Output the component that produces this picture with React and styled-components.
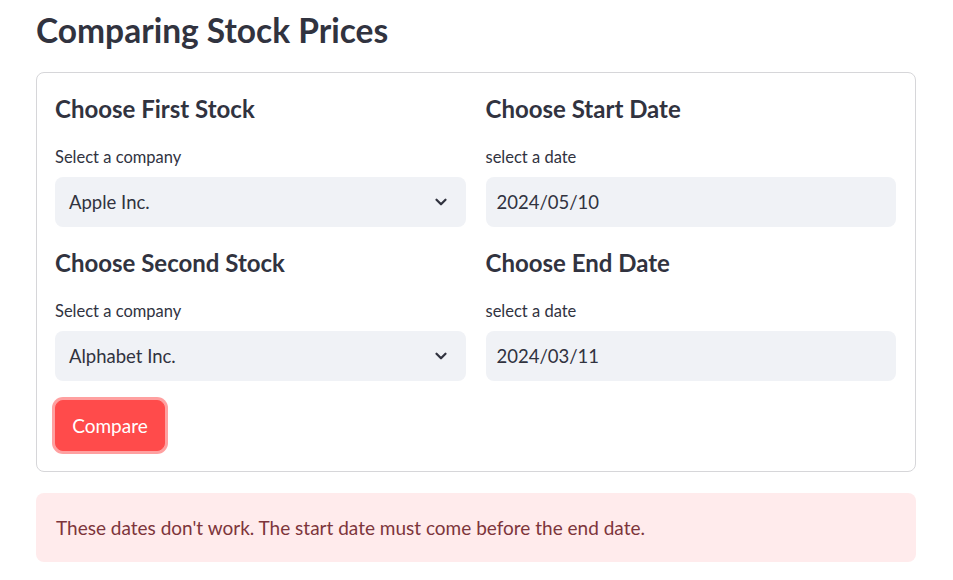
import styled, { createGlobalStyle } from "styled-components";

const GlobalStyle = createGlobalStyle`
  body {
    margin: 0;
    background: #ffffff;
    font-family: "Lato", "Noto Sans", sans-serif;
    color: #31333f;
  }
  * { box-sizing: border-box; }
`;

const Page = styled.div`
  width: 953px;
  padding: 7px 37px 0 36px;
  display: flex;
  flex-direction: column;
`;

const Title = styled.h1`
  margin: 0;
  height: 46px;
  line-height: 46px;
  font-size: 33.5px;
  font-weight: 700;
  color: #31333f;
`;

const Form = styled.div`
  margin-top: 19px;
  border: 1px solid #d6d6d9;
  border-radius: 8px;
  padding: 18px 19px 20px 18px;
  display: flex;
  flex-direction: column;
`;

const Grid = styled.div`
  display: grid;
  grid-template-columns: 1fr 1fr;
  column-gap: 20px;
  row-gap: 18px;
`;

const Field = styled.div`
  display: flex;
  flex-direction: column;
`;

const SubHeader = styled.h3`
  margin: 0;
  height: 36px;
  line-height: 36px;
  font-size: 24px;
  font-weight: 700;
`;

const Label = styled.label`
  margin-top: 19px;
  height: 22px;
  line-height: 22px;
  font-size: 16.5px;
  color: #31333f;
`;

const Box = styled.div`
  margin-top: 9px;
  height: 50px;
  border-radius: 8px;
  background: #f0f2f6;
  display: flex;
  align-items: center;
  justify-content: space-between;
  padding: 0 16px 0 ${(p) => (p.$select ? "14px" : "11px")};
  font-size: 18.5px;
`;

const Chevron = () => (
  <svg width="18" height="18" viewBox="0 0 24 24" fill="none" stroke="#31333f" strokeWidth="3" strokeLinecap="round" strokeLinejoin="round">
    <polyline points="6 9 12 15 18 9" />
  </svg>
);

const Button = styled.button`
  margin-top: 19px;
  align-self: flex-start;
  width: 110px;
  height: 51px;
  border-radius: 8px;
  border: 1px solid #ff4b4b;
  box-shadow: 0 0 0 3px #ffa0a0;
  background: #ff4b4b;
  color: #ffffff;
  font-family: inherit;
  font-size: 19px;
  cursor: pointer;
`;

const Alert = styled.div`
  margin-top: 21px;
  height: 69px;
  border-radius: 8px;
  background: #ffebec;
  color: #7d353b;
  display: flex;
  align-items: center;
  padding: 0 20px;
  font-size: 19px;
`;

const fields = [
  { title: "Choose First Stock", label: "Select a company", value: "Apple Inc.", select: true },
  { title: "Choose Start Date", label: "select a date", value: "2024/05/10" },
  { title: "Choose Second Stock", label: "Select a company", value: "Alphabet Inc.", select: true },
  { title: "Choose End Date", label: "select a date", value: "2024/03/11" },
];

export default function App() {
  return (
    <>
      <GlobalStyle />
      <Page>
        <Title>Comparing Stock Prices</Title>
        <Form>
          <Grid>
            {fields.map((f) => (
              <Field key={f.title}>
                <SubHeader>{f.title}</SubHeader>
                <Label>{f.label}</Label>
                <Box $select={f.select}>
                  <span>{f.value}</span>
                  {f.select && <Chevron />}
                </Box>
              </Field>
            ))}
          </Grid>
          <Button>Compare</Button>
        </Form>
        <Alert>These dates don't work. The start date must come before the end date.</Alert>
      </Page>
    </>
  );
}
